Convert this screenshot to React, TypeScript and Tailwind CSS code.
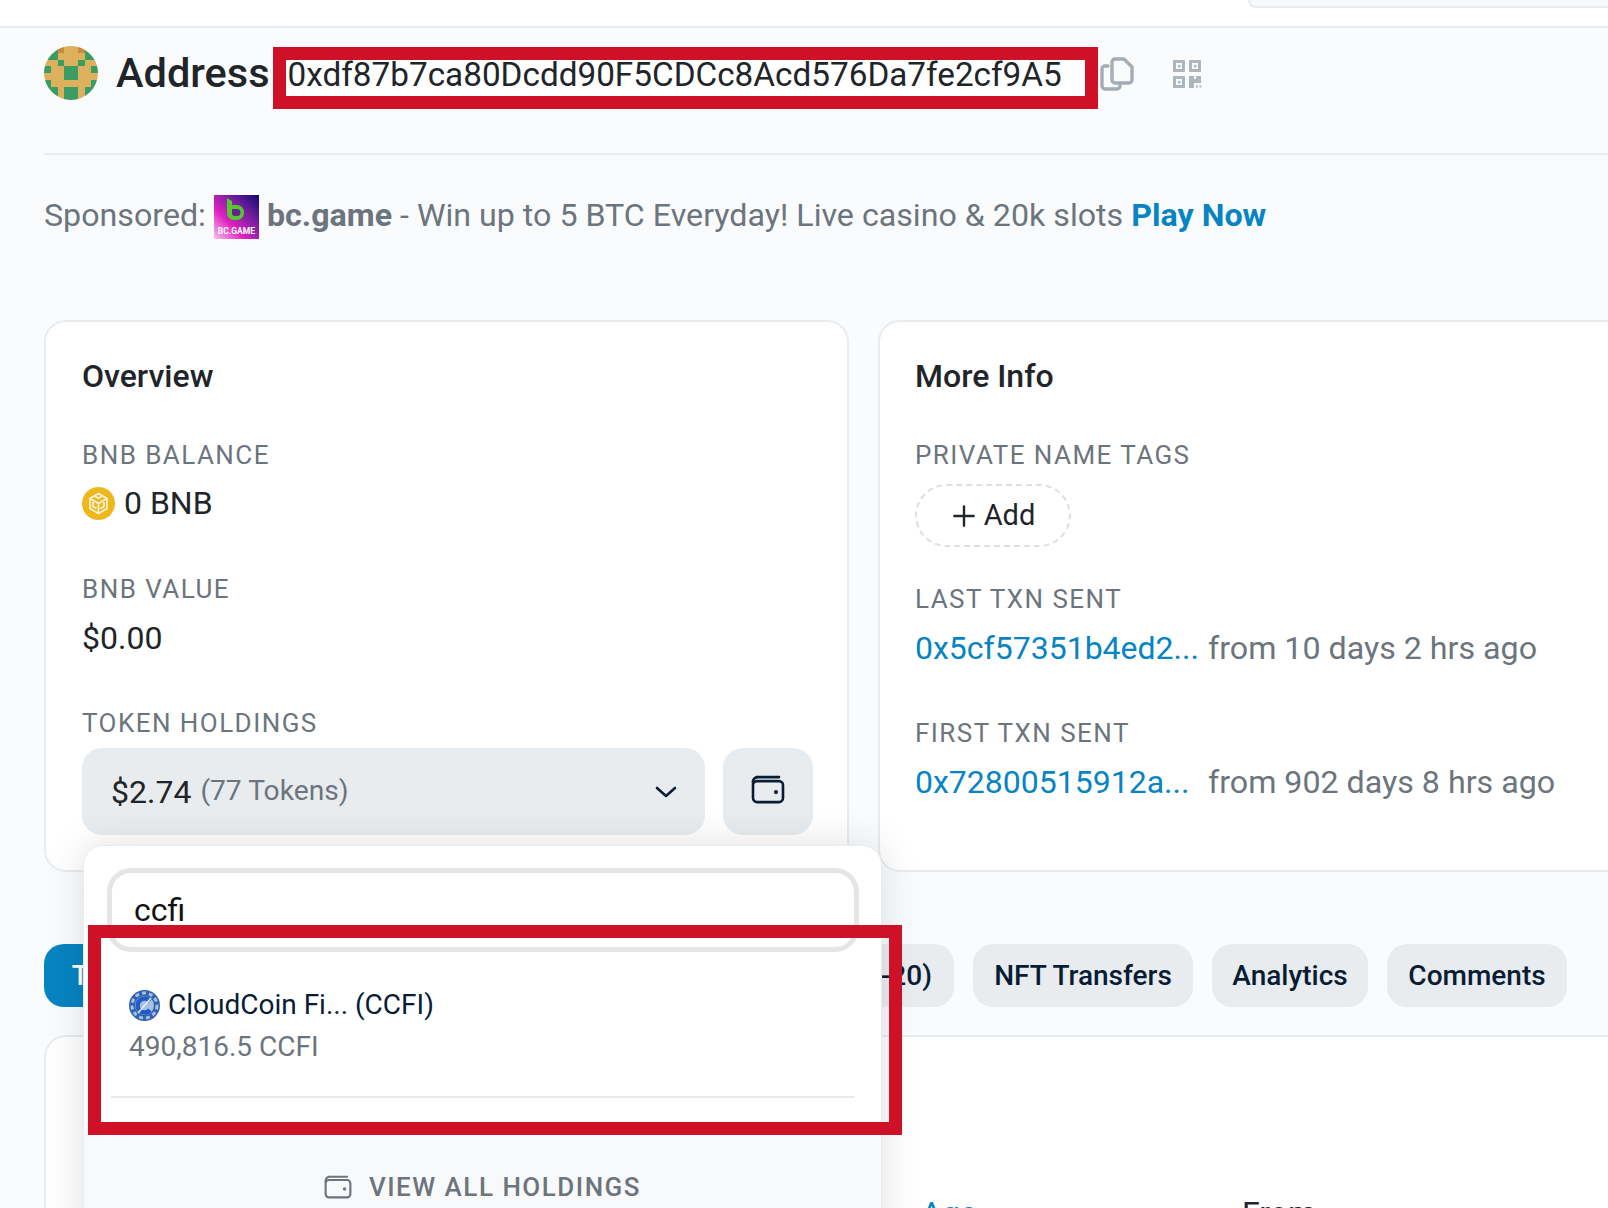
const avatarRows = ["ggommogg", "ggmmmmgg", "mmgmmgmm", "gmmggmmg", "mmmggmmm", "gmmmmmmg", "ggmggmgg", "ggmggmgg"];
const avatarColors: Record<string, string> = { g: "#3b9c64", m: "#dcb05c", o: "#c98a3a" };

function Avatar() {
  return (
    <svg width="54" height="54" viewBox="0 0 8 8" className="shrink-0 rounded-full -mt-[1px]" shapeRendering="crispEdges">
      {avatarRows.map((row, y) =>
        row.split("").map((c, x) => <rect key={`${x}-${y}`} x={x} y={y} width="1.02" height="1.02" fill={avatarColors[c]} />)
      )}
    </svg>
  );
}

function CopyIcon() {
  return (
    <svg width="34" height="34" viewBox="0 0 34 34" fill="none" stroke="#a4acb4" strokeWidth="3.4" strokeLinejoin="round" strokeLinecap="round">
      <path d="M15 2h9l8 8v13a3 3 0 0 1-3 3H15a3 3 0 0 1-3-3V5a3 3 0 0 1 3-3z" />
      <path d="M8 9H5a3 3 0 0 0-3 3v17a3 3 0 0 0 3 3h12a3 3 0 0 0 3-3v-1" />
    </svg>
  );
}

function QrIcon() {
  return (
    <svg width="30" height="30" viewBox="0 0 30 30" fill="#adb5bd">
      <path fillRule="evenodd" d="M2 1h10a1 1 0 0 1 1 1v10a1 1 0 0 1-1 1H2a1 1 0 0 1-1-1V2a1 1 0 0 1 1-1zm2 3v6h6V4zM18 1h10a1 1 0 0 1 1 1v10a1 1 0 0 1-1 1H18a1 1 0 0 1-1-1V2a1 1 0 0 1 1-1zm2 3v6h6V4zM2 17h10a1 1 0 0 1 1 1v10a1 1 0 0 1-1 1H2a1 1 0 0 1-1-1V18a1 1 0 0 1 1-1zm2 3v6h6v-6z" />
      <rect x="6" y="6" width="2.5" height="2.5" />
      <rect x="22" y="6" width="2.5" height="2.5" />
      <rect x="6" y="22" width="2.5" height="2.5" />
      <path d="M17 17h5v3h2v-3h5v7h-7v5h-5z" />
      <rect x="24" y="26.5" width="2" height="2" />
      <rect x="27.5" y="26.5" width="2" height="2" />
    </svg>
  );
}

function BcLogo() {
  return (
    <div className="relative h-[44px] w-[45px] shrink-0 overflow-hidden bg-[linear-gradient(45deg,#f7c3ee_0%,#e021c0_35%,#7a1fa0_65%,#0a0a70_100%)]">
      <svg width="45" height="44" viewBox="0 0 45 44" className="absolute left-0 top-0">
        <path d="M13 3l5 3v4h5a7 7 0 0 1 7 7v1a7 7 0 0 1-7 7h-3a7 7 0 0 1-7-7z" fill="#55c72f" />
        <path d="M18 14h5a3.500 3.500 0 0 1 3.500 3.500 3.500 3.500 0 0 1-3.500 3.500h-2a3 3 0 0 1-3-3z" fill="#6a1e96" />
      </svg>
      <span className="absolute bottom-[3px] left-0 w-full text-center text-[8.5px] font-bold leading-[9px] text-white">BC.GAME</span>
    </div>
  );
}

function BnbIcon() {
  return (
    <svg width="33" height="33" viewBox="0 0 33 33" className="shrink-0">
      <circle cx="16.500" cy="16.500" r="16.500" fill="#efb71c" />
      <g fill="none" stroke="#fff" strokeWidth="1.700" strokeLinejoin="round" opacity="0.85">
        <path d="M16.500 6.500l8.500 5v10l-8.500 5-8.500-5v-10z" />
        <path d="M8 11.500l8.500 5 8.500-5M16.500 16.500v10" />
        <path d="M12.500 9l4 2.300 4-2.300M11 15v4.500l3.500 2M22 15v4.500l-3.500 2" />
      </g>
    </svg>
  );
}

function CcfiIcon() {
  return (
    <svg width="31" height="31" viewBox="0 0 31 31" className="shrink-0">
      <circle cx="15.500" cy="15.500" r="15.500" fill="#2f62b0" />
      <circle cx="15.500" cy="15.500" r="12.500" fill="none" stroke="#a9bfdf" strokeWidth="3" strokeDasharray="4 3" />
      <circle cx="15.500" cy="15.500" r="9.500" fill="#a8c0e2" />
      <path d="M21 11a7 7 0 1 0 0 9" fill="none" stroke="#1f5cc4" strokeWidth="4.500" />
      <path d="M9 23l13-15" stroke="#e6eef8" strokeWidth="1.500" />
    </svg>
  );
}

function WalletIcon({ size, color, stroke }: { size: number; color: string; stroke: number }) {
  return (
    <svg width={size} height={size * 0.86} viewBox="0 0 34 29" fill="none" stroke={color} strokeWidth={stroke} strokeLinecap="round" strokeLinejoin="round">
      <path d="M6 2h22" />
      <rect x="2" y="6" width="30" height="21" rx="4" />
      <path d="M2 8a5 5 0 0 1 4-6" />
      <circle cx="25" cy="17" r="0.8" fill={color} />
    </svg>
  );
}

function Label({ children, className = "" }: { children: string; className?: string }) {
  return <div className={`text-[26px] leading-[32px] tracking-[1.45px] text-[#6c757d] ${className}`}>{children}</div>;
}

function Tab({ children, className }: { children: string; className: string }) {
  return (
    <div className={`flex h-[63px] shrink-0 items-center whitespace-nowrap rounded-[20px] text-[28px] font-medium ${className}`}>
      {children}
    </div>
  );
}

export default function App() {
  return (
    <div className="relative h-[1208px] w-[1608px] overflow-hidden bg-[#fafbfd] [font-family:Roboto,sans-serif] text-[#212529]">
      <header className="flex h-[28px] justify-end border-b-2 border-[#e9ecef] bg-white">
        <div className="h-[8px] w-[360px] rounded-bl-[18px] border-b-2 border-l-2 border-[#e9ecef] bg-[#f8f9fa]" />
      </header>

      <main className="pl-[44px] pt-[19px]">
        <div className="flex items-start">
          <Avatar />
          <h1 className="ml-[18px] text-[41.5px] font-medium leading-[52px]">Address</h1>
          <div className="ml-[3px] h-[62px] w-[825px] border-[13px] border-[#ce1126] bg-white pl-[2px]">
            <span className="block whitespace-nowrap text-[33.3px] leading-[30px]">0xdf87b7ca80Dcdd90F5CDCc8Acd576Da7fe2cf9A5</span>
          </div>
          <div className="ml-[2px] mt-[10px]"><CopyIcon /></div>
          <div className="ml-[38px] mt-[12px]"><QrIcon /></div>
        </div>

        <div className="mt-[44px] h-[2px] bg-[#e9ecef]" />

        <div className="mt-[40px] flex h-[44px] items-center whitespace-nowrap pb-[4px] text-[32.2px] text-[#6c757d]">
          <span>Sponsored:</span>
          <span className="ml-[8px] self-start"><BcLogo /></span>
          <span className="ml-[8px] font-bold">bc.game</span>
          <span className="ml-[8px]">- Win up to 5 BTC Everyday! Live casino &amp; 20k slots</span>
          <span className="ml-[8px] font-bold text-[#0784c3]">Play Now</span>
        </div>

        <div className="relative z-10 mt-[81px] flex gap-[29px]">
          <section className="w-[805px] shrink-0 rounded-[22px] border-2 border-[#e9ecef] bg-white pb-[35px] pl-[36px] pt-[35px]">
            <h2 className="text-[32px] font-medium leading-[38px]">Overview</h2>
            <Label className="mt-[44px]">BNB BALANCE</Label>
            <div className="mt-[12px] flex h-[40px] items-center gap-[9px] text-[32px]">
              <BnbIcon />
              <span>0 BNB</span>
            </div>
            <Label className="mt-[50px]">BNB VALUE</Label>
            <div className="mt-[13px] text-[32px] leading-[40px]">$0.00</div>
            <Label className="mt-[49px]">TOKEN HOLDINGS</Label>
            <div className="relative mt-[9px] flex gap-[18px]">
              <div className="flex h-[87px] w-[623px] items-center rounded-[20px] bg-[#e9ecef] pl-[29px] pr-[28px]">
                <span className="text-[32px]">$2.74</span>
                <span className="ml-[9px] text-[28.2px] text-[#6c757d]">(77 Tokens)</span>
                <svg width="22" height="12" viewBox="0 0 22 12" fill="none" stroke="#081d35" strokeWidth="2.6" strokeLinecap="round" strokeLinejoin="round" className="ml-auto">
                  <path d="M2 2l9 8 9-8" />
                </svg>
              </div>
              <div className="flex h-[87px] w-[90px] items-center justify-center rounded-[20px] bg-[#e9ecef] pb-[4px]">
                <WalletIcon size={34} color="#081d35" stroke={2.6} />
              </div>

              <div className="absolute left-[1px] top-[97px] z-20 h-[420px] w-[799px] rounded-[20px] border border-[#e9ecef] bg-white shadow-[0_0_40px_rgba(0,0,0,0.12)]">
                <div className="ml-[23px] mr-[22px] mt-[22px] flex h-[84px] items-center rounded-[24px] border-[5px] border-[#e5e5e5] bg-white pl-[22px] text-[32px] text-[#111]">
                  ccfi
                </div>
                <div className="ml-[45px] mt-[33px] flex h-[40px] items-center gap-[8px] whitespace-nowrap text-[28px] text-[#081d35]">
                  <CcfiIcon />
                  <span>CloudCoin Fi... (CCFI)</span>
                </div>
                <div className="ml-[45px] mt-[2px] text-[28px] leading-[40px] text-[#6c757d]">490,816.5 CCFI</div>
                <div className="ml-[27px] mr-[26px] mt-[29px] h-[2px] bg-[#e9ecef]" />
                <div className="mt-[31px] flex h-[200px] items-start justify-center gap-[17px] bg-[#f8f9fa] pt-[42px]">
                  <span className="mt-[4px]"><WalletIcon size={28} color="#6c757d" stroke={2.6} /></span>
                  <span className="text-[26px] font-medium leading-[32px] tracking-[1.5px] text-[#6c757d]">VIEW ALL HOLDINGS</span>
                </div>
              </div>
            </div>
          </section>

          <section className="w-[804px] shrink-0 rounded-[22px] border-2 border-[#e9ecef] bg-white pl-[35px] pt-[35px]">
            <h2 className="text-[32px] font-medium leading-[38px]">More Info</h2>
            <Label className="mt-[44px]">PRIVATE NAME TAGS</Label>
            <div className="mt-[13px] flex h-[63px] w-[156px] items-center justify-center gap-[9px] rounded-full border-2 border-dashed border-[#dcdfe3] pl-[2px] text-[29px]">
              <svg width="22" height="22" viewBox="0 0 24 24" stroke="#212529" strokeWidth="2.6" strokeLinecap="round">
                <path d="M12 1.5v21M1.5 12h21" />
              </svg>
              <span>Add</span>
            </div>
            <Label className="mt-[36px]">LAST TXN SENT</Label>
            <div className="mt-[13px] flex whitespace-nowrap text-[32px] leading-[40px]">
              <span className="w-[293px] text-[#0784c3]">0x5cf57351b4ed2...</span>
              <span className="text-[32.2px] text-[#6c757d]">from 10 days 2 hrs ago</span>
            </div>
            <Label className="mt-[49px]">FIRST TXN SENT</Label>
            <div className="mt-[13px] flex whitespace-nowrap text-[32px] leading-[40px]">
              <span className="w-[293px] text-[#0784c3]">0x72800515912a...</span>
              <span className="text-[32.2px] text-[#6c757d]">from 902 days 8 hrs ago</span>
            </div>
          </section>
        </div>

        <div className="mt-[72px] flex gap-[19px]">
          <Tab className="w-[218px] justify-center bg-[#0784c3] text-white">Transactions</Tab>
          <Tab className="w-[300px] justify-center bg-[#e9ecef] text-[#081d35]">Internal Transactions</Tab>
          <Tab className="w-[354px] justify-end bg-[#e9ecef] pr-[22px] text-[#081d35]">Token Transfers (ERC-20)</Tab>
          <Tab className="w-[220px] justify-center bg-[#e9ecef] text-[#081d35]">NFT Transfers</Tab>
          <Tab className="w-[156px] justify-center bg-[#e9ecef] text-[#081d35]">Analytics</Tab>
          <Tab className="w-[180px] justify-center bg-[#e9ecef] text-[#081d35]">Comments</Tab>
        </div>

        <section className="mt-[28px] h-[300px] rounded-tl-[22px] border-l-2 border-t-2 border-[#e9ecef] bg-white pl-[875px] pt-[156px]">
          <div className="flex text-[32px] leading-[40px]">
            <span className="w-[321px] text-[#0784c3]">Age</span>
            <span>From</span>
          </div>
        </section>
      </main>

      <div className="pointer-events-none absolute left-[88px] top-[925px] z-30 h-[210px] w-[814px] border-[13px] border-[#ce1126]" />
    </div>
  );
}
